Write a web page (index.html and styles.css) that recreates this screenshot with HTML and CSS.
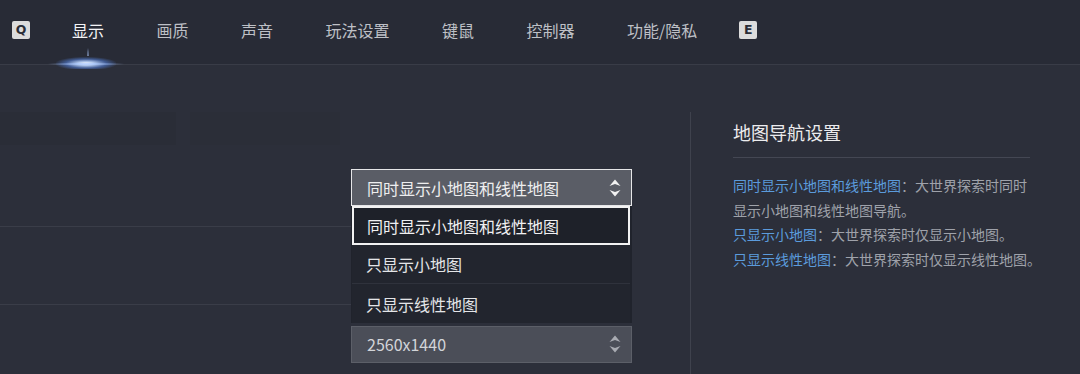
FILE: index.html
```html
<!DOCTYPE html>
<html lang="zh-CN">
<head>
<meta charset="utf-8">
<title>设置</title>
<link rel="stylesheet" href="styles.css">
</head>
<body>
<div class="app">
  <header class="topbar">
    <span class="key">Q</span>
    <nav class="tabs">
      <a class="tab active">显示<span class="glow"></span><span class="streak"></span><span class="spark"></span></a>
      <a class="tab">画质</a>
      <a class="tab">声音</a>
      <a class="tab">玩法设置</a>
      <a class="tab">键鼠</a>
      <a class="tab">控制器</a>
      <a class="tab">功能/隐私</a>
    </nav>
    <span class="key key-e">E</span>
  </header>
  <main class="content">
    <section class="settings">
      <div class="ghost-row"><span class="ghost ghost-a"></span><span class="ghost ghost-b"></span></div>
      <div class="row">
        <div class="select active">
          <span class="value">同时显示小地图和线性地图</span>
          <svg class="spin" width="12" height="24" viewBox="0 0 12 24"><polygon points="0.5,10 6,3.5 11.5,10 6,8"/><polygon points="0.5,14 6,16 11.5,14 6,20.5"/></svg>
          <ul class="dropdown">
            <li class="option selected">同时显示小地图和线性地图</li>
            <li class="option">只显示小地图</li>
            <li class="option">只显示线性地图</li>
          </ul>
        </div>
      </div>
      <div class="row"></div>
      <div class="row">
        <div class="select dim">
          <span class="value">2560x1440</span>
          <svg class="spin" width="12" height="24" viewBox="0 0 12 24"><polygon points="0.5,10 6,3.5 11.5,10 6,8"/><polygon points="0.5,14 6,16 11.5,14 6,20.5"/></svg>
        </div>
      </div>
    </section>
    <aside class="help">
      <h2 class="help-title">地图导航设置</h2>
      <p class="help-item"><span class="term">同时显示小地图和线性地图</span>：大世界探索时同时<br>显示小地图和线性地图导航。</p>
      <p class="help-item"><span class="term">只显示小地图</span>：大世界探索时仅显示小地图。</p>
      <p class="help-item"><span class="term">只显示线性地图</span>：大世界探索时仅显示线性地图。</p>
    </aside>
  </main>
</div>
</body>
</html>
```

FILE: styles.css
```css
* { box-sizing: border-box; }
html, body { margin: 0; padding: 0; }
body {
  background: #2c2f3a;
  font-family: "Noto Sans CJK SC", "Noto Sans", sans-serif;
  color: #c2c4ca;
  width: 1080px;
  height: 374px;
  overflow: hidden;
}
.app { width: 1080px; height: 374px; display: flex; flex-direction: column; }

.topbar {
  height: 65px;
  flex: none;
  display: flex;
  align-items: center;
  padding: 0 0 5px 12px;
  background: #282b36;
  border-bottom: 1px solid #393c47;
}
.key {
  width: 18px;
  height: 18px;
  background: #dcdcdc;
  color: #2a2d37;
  border-radius: 2px;
  font-family: "DejaVu Sans", sans-serif;
  font-weight: bold;
  font-size: 12.5px;
  line-height: 18px;
  text-align: center;
}
.tabs { display: flex; gap: 52.5px; margin-left: 42px; }
.tab {
  position: relative;
  font-size: 16px;
  line-height: 22px;
  color: #bec0c6;
  white-space: nowrap;
}
.tab.active { color: #f4f4f6; }
.glow {
  position: absolute;
  left: 50%;
  top: 38px;
  width: 60px;
  height: 12px;
  margin-left: -32px;
  background: radial-gradient(ellipse at 50% 55%, rgba(255,255,255,1) 0%, rgba(190,215,255,0.9) 20%, rgba(90,140,240,0.5) 48%, rgba(60,100,200,0) 74%);
}
.streak {
  position: absolute;
  left: 50%;
  top: 44px;
  width: 76px;
  height: 2px;
  margin-left: -40px;
  background: linear-gradient(to right, rgba(120,160,240,0) 0%, rgba(170,200,255,0.7) 50%, rgba(120,160,240,0) 100%);
}
.spark {
  position: absolute;
  left: 50%;
  top: 29px;
  width: 2px;
  height: 8px;
  margin-left: -1px;
  background: linear-gradient(to bottom, rgba(150,180,240,0) 0%, rgba(160,190,245,0.35) 50%, rgba(180,205,255,0.5) 100%);
}
.key-e { margin-left: 42px; }

.content { flex: 1; display: flex; }
.settings { width: 690px; flex: none; padding-top: 47px; }
.ghost-row { height: 37px; display: flex; gap: 14px; }
.ghost { height: 33px; background: #2a2d37; }
.ghost-a { width: 176px; }
.ghost-b { width: 150px; background: #2b2e38; }
.row {
  height: 78px;
  width: 632px;
  display: flex;
  align-items: center;
  border-bottom: 1px solid #3a3d48;
}
.row:last-child { border-bottom: none; }
.select {
  position: relative;
  margin-left: 351px;
  width: 281px;
  height: 37px;
  display: flex;
  align-items: center;
  justify-content: space-between;
  padding: 0 10px 0 15px;
  font-size: 16px;
}
.select.active { background: #5a5d66; border: 1px solid #e6e6e8; color: #eeeeef; }
.select.dim { background: #4b4e58; border: 1px solid #5c5f68; color: #d2d4d8; }
.spin { fill: #f2f2f2; }
.dim .spin { fill: #a9abb2; }
.dropdown {
  position: absolute;
  left: -1px;
  top: 36px;
  width: 281px;
  margin: 0;
  padding: 0 2px 0 1px;
  list-style: none;
  background: #20232c;
  z-index: 2;
}
.option {
  height: 39px;
  display: flex;
  align-items: center;
  padding-left: 14px;
  color: #e4e5e8;
  font-size: 16px;
  background: #22252e;
  border-bottom: 1px solid #2f323c;
}
.option:last-child { border-bottom: none; }
.option.selected {
  border: 2px solid #f2f2f2;
  background: #1e2129;
  padding-left: 13px;
  color: #f0f0f2;
}

.help {
  flex: 1;
  margin-top: 47px;
  border-left: 1px solid #3f424d;
  padding: 7px 0 0 42px;
}
.help-title {
  margin: 0;
  width: 297px;
  font-size: 18px;
  font-weight: normal;
  line-height: 26px;
  color: #ececee;
  padding-bottom: 12px;
  border-bottom: 1px solid #444753;
}
.help-item {
  margin: 0;
  font-size: 14px;
  line-height: 24.5px;
  color: #9fa2aa;
  white-space: nowrap;
}
.help-title + .help-item { margin-top: 15px; }
.term { color: #5b9bdc; }
```
